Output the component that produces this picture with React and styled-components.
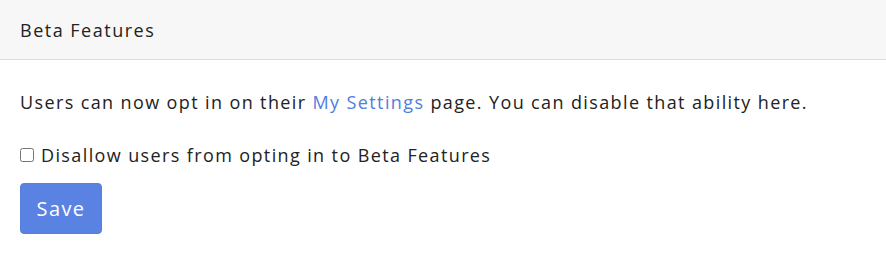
import React from "react";
import styled, { createGlobalStyle } from "styled-components";

const GlobalStyle = createGlobalStyle`
  body {
    margin: 0;
    background: #fff;
    font-family: "Open Sans", "Lato", sans-serif;
    color: #222;
  }
`;

export default function App() {
  return (
    <>
      <GlobalStyle />
      <Panel>
        <Header>Beta Features</Header>
        <Body>
          <Intro>
            Users can now opt in on their <Link href="#">My Settings</Link> page. You can
            disable that ability here.
          </Intro>
          <CheckRow>
            <input type="checkbox" />
            Disallow users from opting in to Beta Features
          </CheckRow>
          <SaveButton>Save</SaveButton>
        </Body>
      </Panel>
    </>
  );
}

const Panel = styled.div`
  width: 886px;
`;

const Header = styled.div`
  height: 60px;
  box-sizing: border-box;
  padding: 0 20px;
  display: flex;
  align-items: center;
  background: #f7f7f7;
  border-bottom: 1px solid #dcdcdc;
  font-size: 18px;
  letter-spacing: 1.5px;
  color: #222;
`;

const Body = styled.div`
  padding: 27px 20px 0;
`;

const Intro = styled.p`
  margin: 0;
  font-size: 18px;
  line-height: 30px;
  letter-spacing: 1.38px;
`;

const Link = styled.a`
  color: #4f7de0;
  text-decoration: none;
`;

const CheckRow = styled.label`
  display: flex;
  align-items: center;
  gap: 7px;
  margin-top: 26px;
  font-size: 18px;
  line-height: 24px;
  letter-spacing: 1.38px;

  input {
    margin: 0;
    width: 14px;
    height: 14px;
  }
`;

const SaveButton = styled.button`
  margin-top: 16px;
  width: 82px;
  height: 51px;
  border: 1px solid #5180e0;
  border-radius: 4px;
  background: #5a82e2;
  color: #fff;
  font-family: "Open Sans", sans-serif;
  font-size: 20px;
  letter-spacing: 1.4px;
  cursor: pointer;
`;
